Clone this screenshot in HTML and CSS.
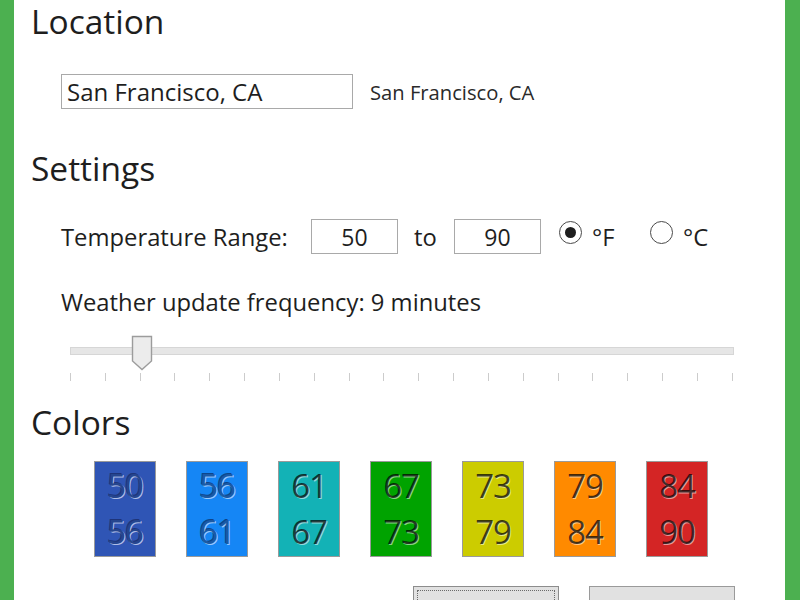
FILE: index.html
```html
<!DOCTYPE html>
<html>
<head>
<meta charset="utf-8">
<link rel="stylesheet" href="styles.css">
</head>
<body>
<div class="frame">
  <div class="content">
    <h2 class="heading h-location">Location</h2>
    <div class="row loc-row">
      <div class="textbox loc-box">San Francisco, CA</div>
      <span class="loc-label">San Francisco, CA</span>
    </div>

    <h2 class="heading h-settings">Settings</h2>
    <div class="row temp-row">
      <span class="label temp-label">Temperature Range:</span>
      <div class="textbox num-box">50</div>
      <span class="label to">to</span>
      <div class="textbox num-box">90</div>
      <span class="radio checked"></span>
      <span class="label unit">°F</span>
      <span class="radio"></span>
      <span class="label unit">°C</span>
    </div>
    <div class="label freq">Weather update frequency: 9 minutes</div>
    <div class="slider">
      <div class="track"></div>
      <svg class="thumb" width="22" height="36" viewBox="0 0 22 36">
        <path d="M1.5 1.5 H20.5 V26 L11 34.5 L1.5 26 Z" fill="#ececec" stroke="#9c9c9c" stroke-width="1.4"/>
      </svg>
      <div class="ticks">
        <i></i><i></i><i></i><i></i><i></i><i></i><i></i><i></i><i></i><i></i>
        <i></i><i></i><i></i><i></i><i></i><i></i><i></i><i></i><i></i><i></i>
      </div>
    </div>

    <h2 class="heading h-colors">Colors</h2>
    <div class="swatches">
      <div class="swatch c1"><span>50</span><span>56</span></div>
      <div class="swatch c2"><span>56</span><span>61</span></div>
      <div class="swatch c3"><span>61</span><span>67</span></div>
      <div class="swatch c4"><span>67</span><span>73</span></div>
      <div class="swatch c5"><span>73</span><span>79</span></div>
      <div class="swatch c6"><span>79</span><span>84</span></div>
      <div class="swatch c7"><span>84</span><span>90</span></div>
    </div>
    <div class="buttons">
      <div class="btn focused"><div class="focus-ring"></div></div>
      <div class="btn"></div>
    </div>
  </div>
</div>
</body>
</html>
```

FILE: styles.css
```css
* { box-sizing: border-box; }
html, body { margin: 0; padding: 0; }
body {
  width: 800px;
  height: 600px;
  overflow: hidden;
  background: #ffffff;
  font-family: "Open Sans", "Noto Sans", sans-serif;
  color: #1e1e1e;
}
.frame {
  width: 800px;
  height: 600px;
  border-left: 14px solid #4cb050;
  border-right: 15px solid #4cb050;
  overflow: hidden;
}
.content {
  padding-left: 17px;
}
.heading {
  margin: 0;
  font-weight: normal;
  font-size: 33.5px;
  height: 40px;
  line-height: 40px;
  color: #1e1e1e;
}
.h-location { margin-top: 1px; }
.row {
  display: flex;
  align-items: center;
  padding-left: 30px;
}
.loc-row { margin-top: 33px; height: 35px; }
.textbox {
  border: 1px solid #a9a9a9;
  height: 35px;
  background: #fff;
  display: flex;
  align-items: center;
}
.loc-box {
  width: 292px;
  padding-left: 5px;
  font-size: 24px;
}
.loc-label {
  margin-left: 17px;
  font-size: 20.2px;
  color: #2a2a2a;
}
.h-settings { margin-top: 39px; }
.temp-row { margin-top: 31px; height: 35px; }
.label { font-size: 23.8px; color: #1e1e1e; }
.temp-label { width: 250px; }
.num-box {
  width: 87px;
  justify-content: center;
  font-size: 23px;
}
.to { margin: 0 16px 0 16px; width: 24px; }
.radio {
  width: 23px;
  height: 23px;
  border: 1.5px solid #4a4a4a;
  border-radius: 50%;
  margin-top: -8px;
  margin-left: 18px;
  display: flex;
  align-items: center;
  justify-content: center;
}
.radio.checked::after {
  content: "";
  width: 11px;
  height: 11px;
  border-radius: 50%;
  background: #1e1e1e;
}
.radio + .unit { margin-left: 10px; width: 40px; }
.freq {
  margin-top: 36px;
  height: 24px;
  line-height: 24px;
  padding-left: 30px;
}
.slider {
  position: relative;
  margin-top: 21px;
  margin-left: 39px;
  width: 664px;
  height: 48px;
}
.track {
  position: absolute;
  left: 0;
  top: 12px;
  width: 664px;
  height: 8px;
  background: #e6e6e6;
  border: 1px solid #d6d6d6;
}
.thumb {
  position: absolute;
  left: 61px;
  top: 0;
}
.ticks {
  position: absolute;
  left: 0;
  top: 38px;
  width: 663px;
  display: flex;
  justify-content: space-between;
}
.ticks i {
  display: block;
  width: 1px;
  height: 8px;
  background: #cccccc;
}
.h-colors { margin-top: 19px; }
.swatches {
  display: flex;
  gap: 30px;
  padding-left: 63px;
  margin-top: 19px;
}
.swatch {
  width: 62px;
  height: 96px;
  border: 1px solid #9a9a9a;
  display: flex;
  flex-direction: column;
  align-items: center;
  justify-content: center;
  font-size: 33px;
  line-height: 46px;
  letter-spacing: -1px;
  color: rgba(0, 0, 0, 0.72);
  text-shadow: 1px 1px 0 rgba(255, 255, 255, 0.55);
}
.c1 { background: #2f55b5; color: #26468f; text-shadow: 1px 1px 0 rgba(200,210,240,0.85), -1px -1px 0 rgba(20,30,80,0.6); }
.c2 { background: #1586f5; color: #1a5aa6; text-shadow: 1px 1px 0 rgba(200,225,255,0.75), -1px -1px 0 rgba(10,40,90,0.7); }
.c3 { background: #13b2b6; }
.c4 { background: #00a300; }
.c5 { background: #cccc00; }
.c6 { background: #ff8a00; }
.c7 { background: #d42525; }
.buttons {
  display: flex;
  gap: 30px;
  padding-left: 382px;
  margin-top: 29px;
}
.btn {
  width: 146px;
  height: 34px;
  background: #e1e1e1;
  border: 1px solid #9a9a9a;
}
.btn.focused { padding: 3px; border-color: #8c8c8c; }
.focus-ring {
  height: 100%;
  border: 1px dotted #6a6a6a;
}
```
